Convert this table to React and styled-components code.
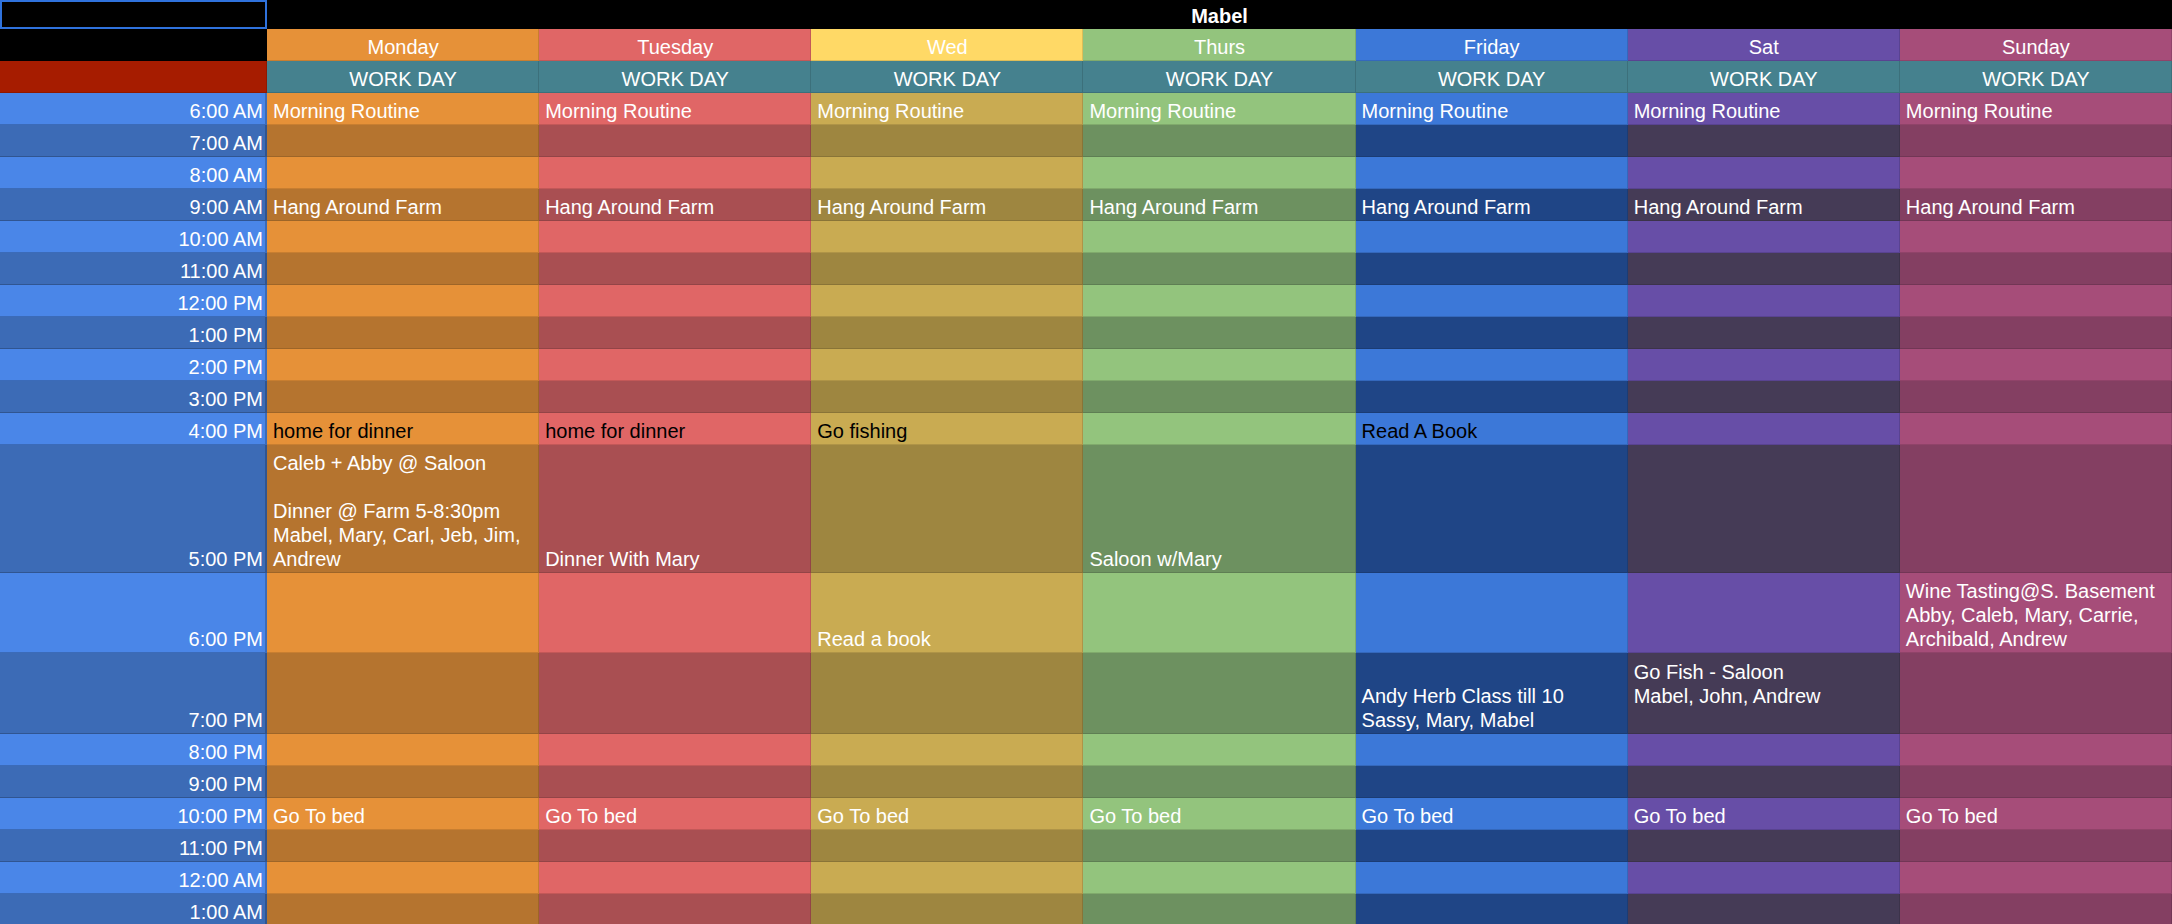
import React from "react";
import styled, { createGlobalStyle } from "styled-components";

const Global = createGlobalStyle`
  html, body { margin: 0; padding: 0; background: #000; overflow: hidden; }
  body { font-family: "Liberation Sans", Arial, sans-serif; }
`;

const Sheet = styled.div`
  display: grid;
  width: 2172px;
  grid-template-columns: 267px repeat(7, 1fr);
  grid-template-rows: ${(p) => p.$rows};
  font-family: "Liberation Sans", Arial, sans-serif;
  font-size: 20px;
  line-height: 24px;
  color: #fff;
`;

const Corner = styled.div`
  background: #000;
  box-shadow: inset 0 0 0 2px #2f72dc;
`;

const Title = styled.div`
  grid-column: 2 / span 7;
  background: #000;
  color: #fff;
  font-weight: bold;
  display: flex;
  align-items: flex-end;
  justify-content: center;
  padding-bottom: 1px;
`;

const Cell = styled.div`
  background: ${(p) => p.$bg};
  color: ${(p) => p.$fg || "#fff"};
  display: flex;
  flex-direction: column;
  justify-content: flex-end;
  align-items: ${(p) => p.$align || "flex-start"};
  padding: 0 ${(p) => (p.$align === "flex-end" ? "4px" : "6px")} 2px 6px;
  box-shadow: inset -1px -1px 0 rgba(0, 0, 0, 0.13);
  overflow: hidden;
  white-space: nowrap;
  min-width: 0;
`;

const TimeCell = styled(Cell)`
  box-shadow: inset -2px -1px 0 rgba(0, 0, 0, 0.2);
`;

const Line = styled.div`
  min-height: 24px;
`;

const days = [
  { name: "Monday", head: "#e69138", light: "#e69138", dark: "#b5742f" },
  { name: "Tuesday", head: "#e06666", light: "#e06666", dark: "#a94f52" },
  { name: "Wed", head: "#ffd966", light: "#c9ab52", dark: "#9e8640" },
  { name: "Thurs", head: "#93c47d", light: "#93c47d", dark: "#6d9160" },
  { name: "Friday", head: "#3c78d8", light: "#3c78d8", dark: "#1f4586" },
  { name: "Sat", head: "#674ea7", light: "#674ea7", dark: "#453b56" },
  { name: "Sunday", head: "#a64d79", light: "#a64d79", dark: "#843f62" },
];

const hours = [
  ["6:00 AM", 32],
  ["7:00 AM", 32],
  ["8:00 AM", 32],
  ["9:00 AM", 32],
  ["10:00 AM", 32],
  ["11:00 AM", 32],
  ["12:00 PM", 32],
  ["1:00 PM", 32],
  ["2:00 PM", 32],
  ["3:00 PM", 32],
  ["4:00 PM", 32],
  ["5:00 PM", 128],
  ["6:00 PM", 80],
  ["7:00 PM", 81],
  ["8:00 PM", 32],
  ["9:00 PM", 32],
  ["10:00 PM", 32],
  ["11:00 PM", 32],
  ["12:00 AM", 32],
  ["1:00 AM", 32],
];

const common = { 0: "Morning Routine", 3: "Hang Around Farm", 16: "Go To bed" };
const black = (t) => ({ text: t, black: true });

const events = [
  {
    ...common,
    10: black("home for dinner"),
    11: "Caleb + Abby @ Saloon\n\nDinner @ Farm 5-8:30pm\nMabel, Mary, Carl, Jeb, Jim,\nAndrew",
  },
  { ...common, 10: black("home for dinner"), 11: "Dinner With Mary" },
  { ...common, 10: black("Go fishing"), 12: "Read a book" },
  { ...common, 11: "Saloon w/Mary" },
  { ...common, 10: black("Read A Book"), 13: "Andy Herb Class till 10\nSassy, Mary, Mabel" },
  { ...common, 13: "Go Fish - Saloon\nMabel, John, Andrew\n" },
  { ...common, 12: "Wine Tasting@S. Basement\nAbby, Caleb, Mary, Carrie,\nArchibald, Andrew" },
];

const Lines = ({ text }) =>
  text.split("\n").map((l, i) => <Line key={i}>{l}</Line>);

export default function App() {
  const rows = ["29px", "32px", "32px", ...hours.map((h) => `${h[1]}px`)].join(" ");
  return (
    <>
      <Global />
      <Sheet $rows={rows}>
        <Corner />
        <Title>Mabel</Title>

        <Cell $bg="#000" />
        {days.map((d) => (
          <Cell key={d.name} $bg={d.head} $align="center">
            <Line>{d.name}</Line>
          </Cell>
        ))}

        <Cell $bg="#a61c00" />
        {days.map((d) => (
          <Cell key={d.name} $bg="#45818e" $align="center">
            <Line>WORK DAY</Line>
          </Cell>
        ))}

        {hours.map(([label], r) => {
          const dark = r % 2 === 1;
          return (
            <React.Fragment key={label}>
              <TimeCell $bg={dark ? "#3c6bb6" : "#4a86e8"} $align="flex-end">
                <Line>{label}</Line>
              </TimeCell>
              {days.map((d, c) => {
                const ev = events[c][r];
                const text = ev ? (typeof ev === "string" ? ev : ev.text) : "";
                const fg = ev && ev.black ? "#000" : "#fff";
                return (
                  <Cell key={d.name} $bg={dark ? d.dark : d.light} $fg={fg}>
                    {text && <Lines text={text} />}
                  </Cell>
                );
              })}
            </React.Fragment>
          );
        })}
      </Sheet>
    </>
  );
}
